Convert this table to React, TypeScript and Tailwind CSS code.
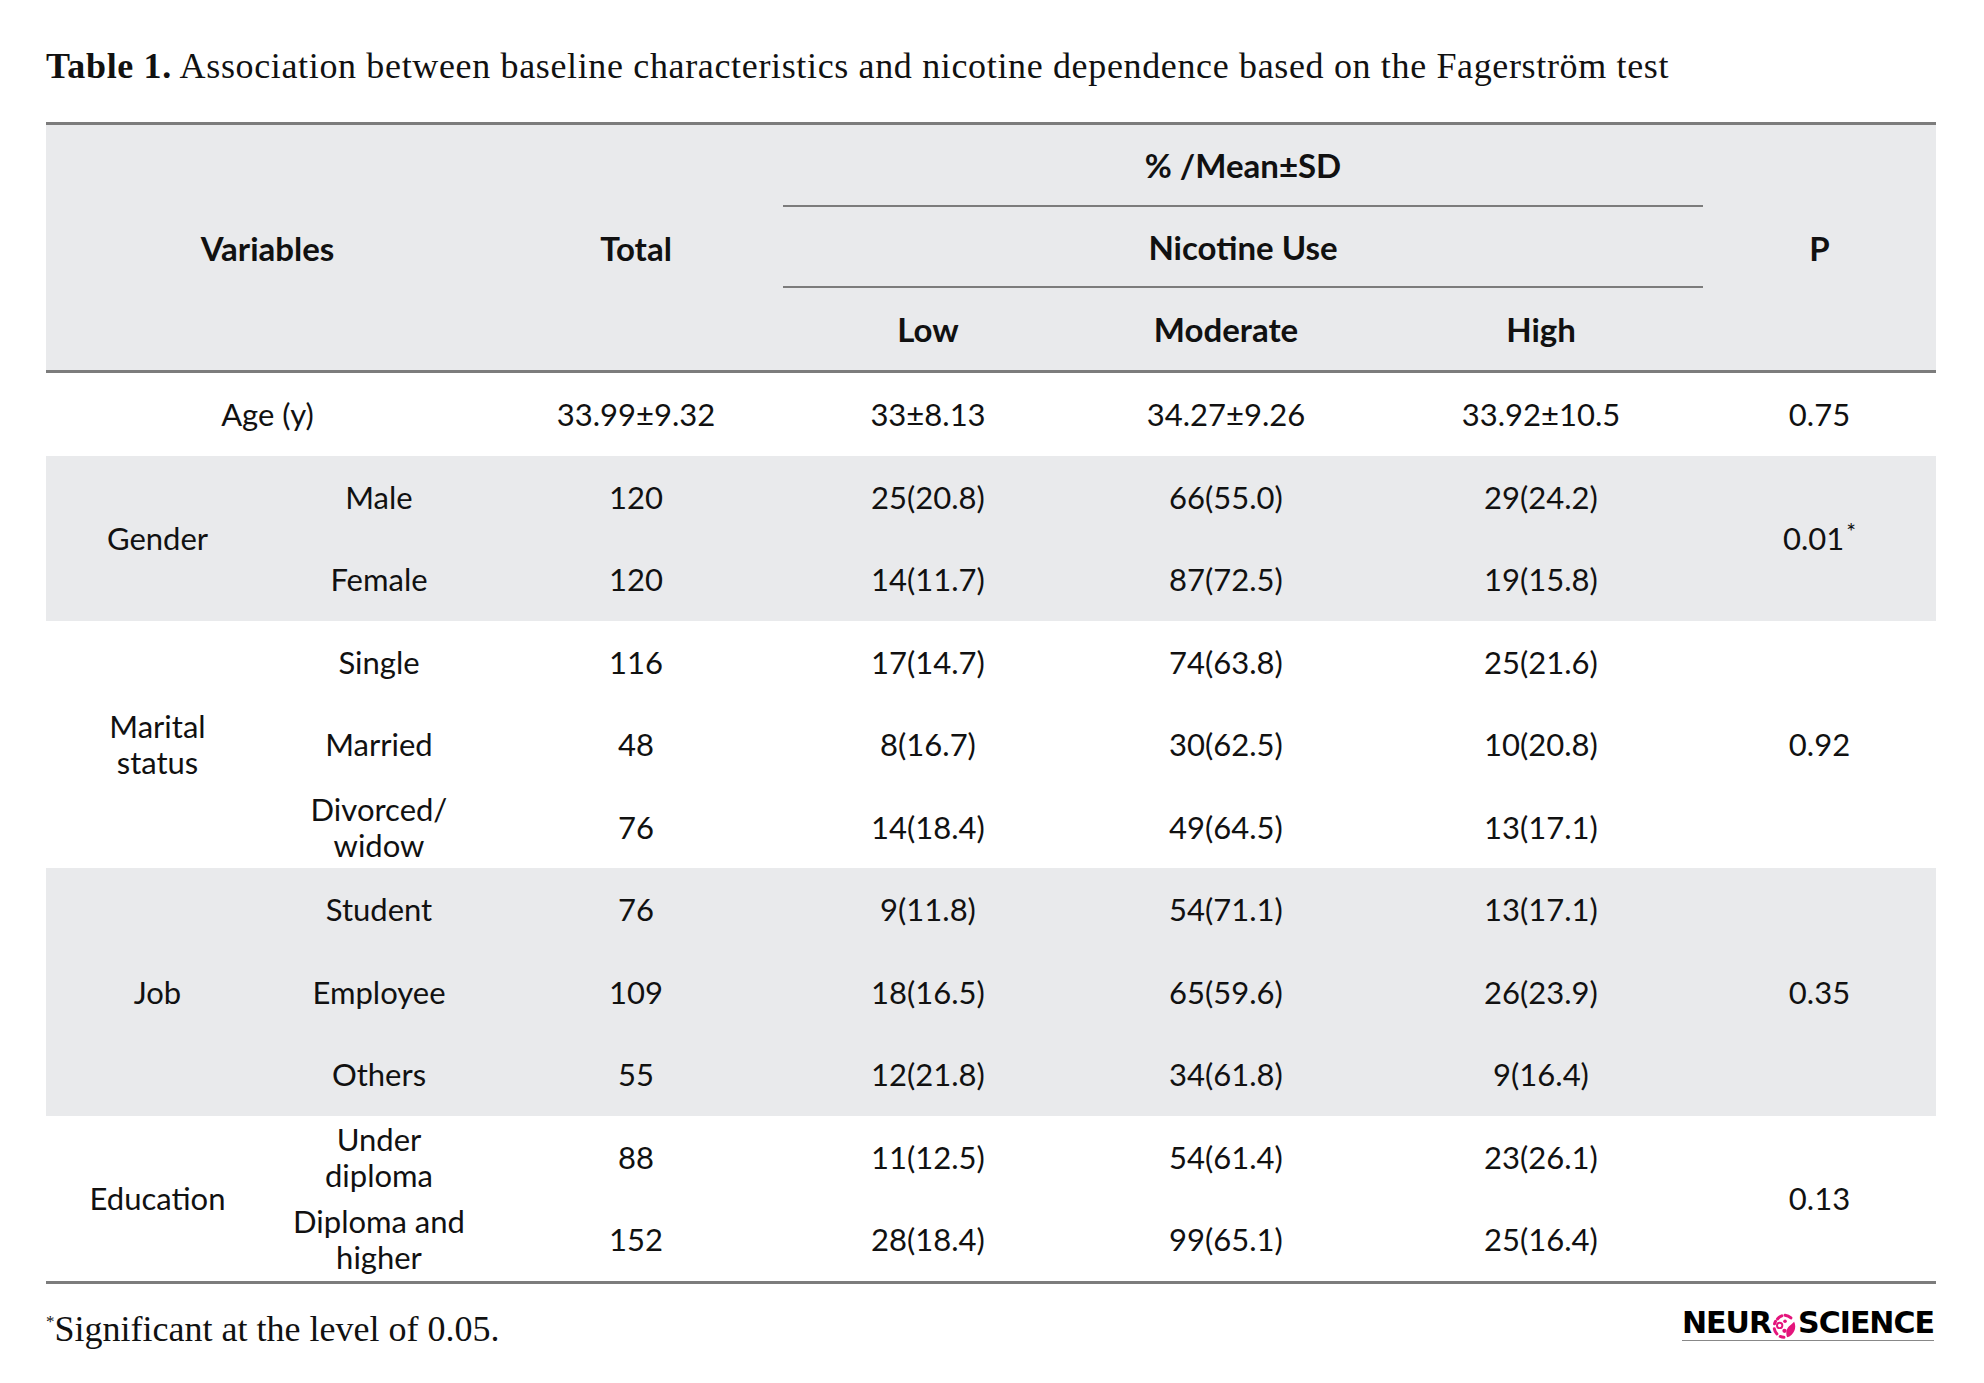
import React from 'react';

type Group = {
  label: React.ReactNode;
  p: React.ReactNode;
  shaded: boolean;
  rows: string[][];
};

const groups: Group[] = [
  {
    label: 'Gender',
    p: (
      <>
        0.01<sup className="text-[23px] -top-[7px] ml-[2px]">*</sup>
      </>
    ),
    shaded: true,
    rows: [
      ['Male', '120', '25(20.8)', '66(55.0)', '29(24.2)'],
      ['Female', '120', '14(11.7)', '87(72.5)', '19(15.8)'],
    ],
  },
  {
    label: (
      <>
        Marital
        <br />
        status
      </>
    ),
    p: '0.92',
    shaded: false,
    rows: [
      ['Single', '116', '17(14.7)', '74(63.8)', '25(21.6)'],
      ['Married', '48', '8(16.7)', '30(62.5)', '10(20.8)'],
      ['Divorced/\nwidow', '76', '14(18.4)', '49(64.5)', '13(17.1)'],
    ],
  },
  {
    label: 'Job',
    p: '0.35',
    shaded: true,
    rows: [
      ['Student', '76', '9(11.8)', '54(71.1)', '13(17.1)'],
      ['Employee', '109', '18(16.5)', '65(59.6)', '26(23.9)'],
      ['Others', '55', '12(21.8)', '34(61.8)', '9(16.4)'],
    ],
  },
  {
    label: 'Education',
    p: '0.13',
    shaded: false,
    rows: [
      ['Under\ndiploma', '88', '11(12.5)', '54(61.4)', '23(26.1)'],
      ['Diploma and\nhigher', '152', '28(18.4)', '99(65.1)', '25(16.4)'],
    ],
  },
];

// widths of the value columns after the two variable columns
const valueWidths = ['w-[294px]', 'w-[290px]', 'w-[306px]', 'w-[324px]'];

const Cell = ({ className = '', children }: { className?: string; children: React.ReactNode }) => (
  <div className={`flex items-center justify-center text-center whitespace-pre-line leading-[36px] ${className}`}>
    {children}
  </div>
);

const NeuroBall = () => (
  <svg width="27" height="29" viewBox="0 0 25 27" className="-mb-[3px] shrink-0">
    <g fill="none" stroke="#e4157c" strokeWidth="2.8" strokeLinecap="round">
      <path d="M6 6.5 A10 10 0 0 1 10 3.6" />
      <path d="M13 3 A10 10 0 0 1 18.5 5.5" />
      <path d="M3.2 11 A10 10 0 0 1 4.2 8.6" />
      <path d="M3 15.5 A10 10 0 0 0 5.5 20.5" />
      <path d="M8.5 22.8 A10 10 0 0 0 12 23.6" />
    </g>
    <circle cx="8" cy="12.5" r="2.5" fill="none" stroke="#e4157c" strokeWidth="1.8" />
    <circle cx="13" cy="8.6" r="1.7" fill="#e4157c" />
    <path d="M21.5 9 A10.5 10.5 0 0 1 15 23.5 C13.5 20.5 14 16 16.5 13.5 C18 12 20 10.5 21.5 9 Z" fill="#e4157c" />
    <circle cx="12.5" cy="17.5" r="2" fill="#e4157c" />
  </svg>
);

export default function App() {
  return (
    <div className="min-h-screen bg-white text-[#111] pl-[46px] pt-[46px]">
      {/* Caption */}
      <p className="font-['Liberation_Serif',serif] text-[36px] leading-[40px] tracking-[0.65px] whitespace-nowrap">
        <span className="font-bold">Table 1.</span> Association between baseline characteristics and nicotine
        dependence based on the Fagerström test
      </p>

      <div className="mt-[36px] w-[1890px] font-['Lato',sans-serif] text-[31px]">
        {/* Header */}
        <div className="flex bg-[#e9eaec] border-y-[3px] border-[#7c7c7c] font-bold text-[33px]">
          <Cell className="w-[443px]">Variables</Cell>
          <Cell className="w-[294px]">Total</Cell>
          <div className="w-[920px] flex flex-col">
            <Cell className="h-[81.7px] border-b-2 border-[#7c7c7c]">% /Mean±SD</Cell>
            <Cell className="h-[81.7px] border-b-2 border-[#7c7c7c]">Nicotine Use</Cell>
            <div className="flex h-[81.7px]">
              <Cell className="w-[290px]">Low</Cell>
              <Cell className="w-[306px]">Moderate</Cell>
              <Cell className="w-[324px]">High</Cell>
            </div>
          </div>
          <Cell className="w-[233px]">P</Cell>
        </div>

        {/* Body */}
        <div className="border-b-[3px] border-[#7c7c7c]">
          <div className="flex h-[82.5px]">
            <Cell className="w-[443px]">Age (y)</Cell>
            {['33.99±9.32', '33±8.13', '34.27±9.26', '33.92±10.5'].map((v, i) => (
              <Cell key={v} className={valueWidths[i]}>
                {v}
              </Cell>
            ))}
            <Cell className="w-[233px]">0.75</Cell>
          </div>

          {groups.map((g, gi) => (
            <div key={gi} className={`flex ${g.shaded ? 'bg-[#e9eaec]' : 'bg-white'}`}>
              <Cell className="w-[223px]">{g.label}</Cell>
              <div className="flex flex-col">
                {g.rows.map((r) => (
                  <div key={r[0]} className="flex h-[82.5px]">
                    <Cell className="w-[220px]">{r[0]}</Cell>
                    {r.slice(1).map((v, i) => (
                      <Cell key={i} className={valueWidths[i]}>
                        {v}
                      </Cell>
                    ))}
                  </div>
                ))}
              </div>
              <Cell className="w-[233px]">{g.p}</Cell>
            </div>
          ))}
        </div>

        {/* Footer */}
        <div className="flex justify-between items-start">
          <p className="mt-[25px] font-['Liberation_Serif',serif] text-[36px] leading-[40px]">
            <sup className="text-[17px] -top-[14px]">*</sup>Significant at the level of 0.05.
          </p>
          <div className="mt-[23px] mr-[2px] w-[252px] pb-[2px] border-b border-[#888] flex items-end justify-between font-['DejaVu_Sans',sans-serif] font-bold text-[30px] leading-[31px] tracking-[-1px] text-black">
            <span>NEUR</span>
            <NeuroBall />
            <span>SCIENCE</span>
          </div>
        </div>
      </div>
    </div>
  );
}
